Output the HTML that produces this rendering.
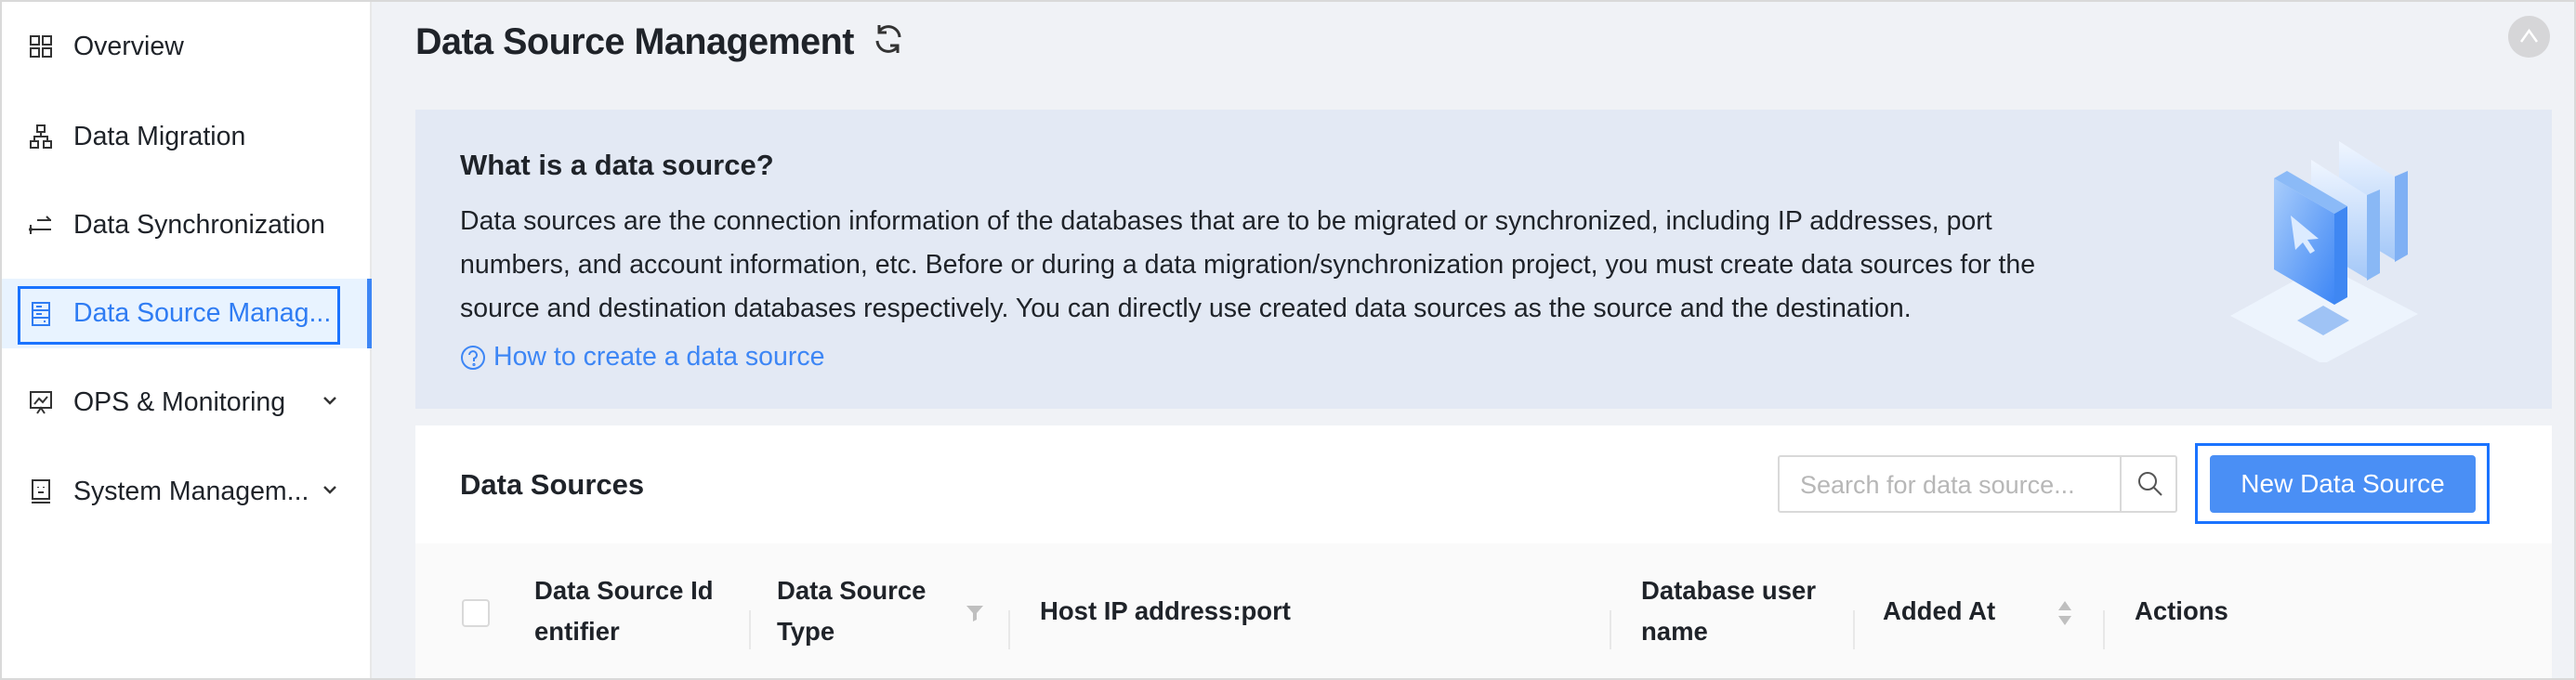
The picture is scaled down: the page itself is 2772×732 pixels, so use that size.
<!DOCTYPE html>
<html><head><meta charset="utf-8"><style>
*{box-sizing:border-box;margin:0;padding:0}
body{width:2772px;height:732px;overflow:hidden;background:#f0f2f6;font-family:"Liberation Sans",sans-serif;color:#1f2329;position:relative}
.frame{position:absolute;inset:0;border:2px solid #d9d9d9;pointer-events:none;z-index:9}
.side{position:absolute;left:0;top:0;width:400px;height:732px;background:#fff;border-right:2px solid #e8e8e8}
.item{position:absolute;left:0;width:400px;height:60px;display:flex;align-items:center;font-size:28.5px;color:#1f2329}
.item .ic{position:absolute;left:30px;width:28px;height:28px}
.item .tx{position:absolute;left:79px;white-space:nowrap}
.item .ch{position:absolute;left:345px;top:18px}
.sel{background:#e8f3ff;height:75px;border-right:5px solid #3d86f5;color:#2f7cf3}
.focus{position:absolute;left:19px;top:308px;width:347px;height:63px;border:3px solid #1a73ff}
h1{position:absolute;left:447px;top:23px;font-size:39.5px;font-weight:bold;letter-spacing:-0.5px;white-space:nowrap}
.banner{position:absolute;left:447px;top:118px;width:2299px;height:322px;background:#e3e9f4}
.banner h2{position:absolute;left:48px;top:42px;font-size:31px;font-weight:bold}
.banner p{position:absolute;left:48px;top:97px;font-size:28.5px;line-height:47px;color:#1f2329;white-space:nowrap}
.banner .lk{position:absolute;left:48px;top:250px;font-size:28.5px;color:#3d86f5;display:flex;align-items:center;gap:8px}
.card{position:absolute;left:447px;top:458px;width:2299px;height:274px;background:#fff}
.card h3{position:absolute;left:48px;top:46px;font-size:31px;font-weight:bold}
.search{position:absolute;left:1466px;top:32px;width:430px;height:62px;border:2px solid #d9d9d9;border-radius:3px;background:#fff}
.search span{position:absolute;left:22px;top:15px;font-size:27px;color:#b7b7b7;white-space:nowrap}
.search .sb{position:absolute;left:366px;top:0;width:62px;height:58px;border-left:2px solid #d9d9d9}
.btnf{position:absolute;left:1915px;top:19px;width:317px;height:87px;border:3px solid #1a73ff}
.btn{position:absolute;left:1931px;top:32px;width:286px;height:62px;background:#4a8ff5;border-radius:4px;color:#fff;font-size:28px;display:flex;align-items:center;justify-content:center}
.thead{position:absolute;left:0;top:127px;width:2299px;height:147px;background:#fafafa}
.th{position:absolute;font-size:27.5px;font-weight:bold;line-height:44px;color:#1f2329;white-space:nowrap}
.dv{position:absolute;top:72px;width:2px;height:42px;background:#e8e8e8}
.cb{position:absolute;left:50px;top:60px;width:30px;height:30px;border:2px solid #d9d9d9;border-radius:4px;background:#fff}
.top{position:absolute;left:2699px;top:17px;width:45px;height:45px;border-radius:50%;background:#d6d6d8}
</style></head><body>
<div class="side">
 <div class="item" style="top:20px"><svg class="ic" viewBox="0 0 28 28" fill="none" stroke="#333" stroke-width="2"><rect x="3" y="3" width="9" height="9"/><rect x="16" y="3" width="9" height="9"/><rect x="3" y="16" width="9" height="9"/><rect x="16" y="16" width="9" height="9"/></svg><span class="tx">Overview</span></div>
 <div class="item" style="top:117px"><svg class="ic" viewBox="0 0 28 28" fill="none" stroke="#333" stroke-width="2"><rect x="10" y="2" width="8" height="7"/><rect x="3" y="19" width="8" height="7"/><rect x="17" y="19" width="8" height="7"/><path d="M14 9v5M7 19v-5h14v5"/></svg><span class="tx">Data Migration</span></div>
 <div class="item" style="top:212px"><svg class="ic" viewBox="0 0 28 28" fill="none" stroke="#333" stroke-width="2"><path d="M10 9h15M20 5l4 4M3 19h22M3 14v10"/><circle cx="3" cy="19" r="1"/></svg><span class="tx">Data Synchronization</span></div>
 <div class="item sel" style="top:300px"><svg class="ic" viewBox="0 0 28 28" fill="none" stroke="#2f7cf3" stroke-width="2"><rect x="5" y="2" width="18" height="24"/><path d="M5 10h18M5 18h18M9 6h6M9 14h6M17 22h2"/></svg><span class="tx">Data Source Manag...</span></div>
 <div class="focus"></div>
 <div class="item" style="top:403px"><svg class="ic" viewBox="0 0 28 28" fill="none" stroke="#333" stroke-width="2"><rect x="3" y="3" width="22" height="17"/><path d="M7 16l5-6 4 4 5-6M10 26l4-6 4 6"/></svg><span class="tx">OPS &amp; Monitoring</span><svg class="ch" width="20" height="20" viewBox="0 0 20 20"><path d="M4 7l6 6 6-6" fill="none" stroke="#333" stroke-width="2.5"/></svg></div>
 <div class="item" style="top:499px"><svg class="ic" viewBox="0 0 28 28" fill="none" stroke="#333" stroke-width="2"><rect x="5" y="2" width="18" height="20"/><path d="M4 26h20M11 9v1M17 9v1M11 15h6"/></svg><span class="tx">System Managem...</span><svg class="ch" width="20" height="20" viewBox="0 0 20 20"><path d="M4 7l6 6 6-6" fill="none" stroke="#333" stroke-width="2.5"/></svg></div>
</div>
<h1>Data Source Management</h1>
<svg style="position:absolute;left:938px;top:24px" width="36" height="36" viewBox="0 0 36 36" fill="none" stroke="#333" stroke-width="3"><path d="M30 16A12 12 0 0 0 8 10M6 20a12 12 0 0 0 22 6"/><path d="M8 3v8h8M28 33v-8h-8"/></svg>
<div class="top"><svg width="45" height="45" viewBox="0 0 45 45"><path d="M14 28l8.5-12 8.5 12" fill="none" stroke="#fff" stroke-width="2.5"/></svg></div>
<div class="banner">
 <h2>What is a data source?</h2>
 <p>Data sources are the connection information of the databases that are to be migrated or synchronized, including IP addresses, port<br>numbers, and account information, etc. Before or during a data migration/synchronization project, you must create data sources for the<br>source and destination databases respectively. You can directly use created data sources as the source and the destination.</p>
 <div class="lk"><svg width="28" height="28" viewBox="0 0 28 28" fill="none" stroke="#3d86f5" stroke-width="2"><circle cx="14" cy="14" r="12"/><path d="M10 11a4 4 0 1 1 5 4v3"/><circle cx="15" cy="21.5" r="0.6"/></svg>How to create a data source</div>
 <svg style="position:absolute;left:1945px;top:22px" width="220" height="250" viewBox="0 0 220 250">
  <defs><linearGradient id="g1" x1="0" y1="0" x2="1" y2="1"><stop offset="0" stop-color="#a9cdfb"/><stop offset="1" stop-color="#3d86f5"/></linearGradient><linearGradient id="g2" x1="0" y1="0" x2="0" y2="1"><stop offset="0" stop-color="#f0f6ff"/><stop offset="1" stop-color="#a4c8f8"/></linearGradient></defs>
  <path d="M8 200L108 145 210 198 108 252Z" fill="#edf4fd"/>
  <path d="M80 205l28-16 28 16-28 16Z" fill="#9fc3f5"/>
  <path d="M125 12l60 38v90l-60-36Z" fill="url(#g2)"/><path d="M185 50l14-6v90l-14 8Z" fill="#7fb0f4"/>
  <path d="M95 32l60 38v90l-60-36Z" fill="url(#g2)"/><path d="M155 70l14-6v90l-14 8Z" fill="#89b8f5"/>
  <path d="M55 52l65 38v98l-65-38Z" fill="url(#g1)"/><path d="M120 90l14-8v98l-14 8Z" fill="#3f87f2"/><path d="M55 52l14-8 65 38-14 8Z" fill="#8bbaf7"/>
  <path d="M73 92l30 25-12 1 8 12-5 3-8-12-8 8Z" fill="#dcebff"/>
 </svg>
</div>
<div class="card">
 <h3>Data Sources</h3>
 <div class="search"><span>Search for data source...</span><div class="sb"><svg style="position:absolute;left:16px;top:14px" width="30" height="30" viewBox="0 0 30 30" fill="none" stroke="#555" stroke-width="2"><circle cx="12" cy="12" r="9"/><path d="M19 19l8 8"/></svg></div></div>
 <div class="btnf"></div>
 <div class="btn">New Data Source</div>
 <div class="thead">
  <div class="cb"></div>
  <div class="th" style="left:128px;top:29px">Data Source Id<br>entifier</div>
  <div class="dv" style="left:359px"></div>
  <div class="th" style="left:389px;top:29px">Data Source<br>Type</div>
  <svg style="position:absolute;left:592px;top:66px" width="20" height="18" viewBox="0 0 20 18"><path d="M1 1h18l-7 8v7l-4 2V9Z" fill="#bfbfbf"/></svg>
  <div class="dv" style="left:638px"></div>
  <div class="th" style="left:672px;top:51px">Host IP address:port</div>
  <div class="dv" style="left:1285px"></div>
  <div class="th" style="left:1319px;top:29px">Database user<br>name</div>
  <div class="dv" style="left:1547px"></div>
  <div class="th" style="left:1579px;top:51px">Added At</div>
  <svg style="position:absolute;left:1766px;top:60px" width="18" height="30" viewBox="0 0 18 30"><path d="M9 2l7 10H2Z M9 28l7-10H2Z" fill="#bfbfbf"/></svg>
  <div class="dv" style="left:1816px"></div>
  <div class="th" style="left:1850px;top:51px">Actions</div>
 </div>
</div>
<div class="frame"></div>
</body></html>
